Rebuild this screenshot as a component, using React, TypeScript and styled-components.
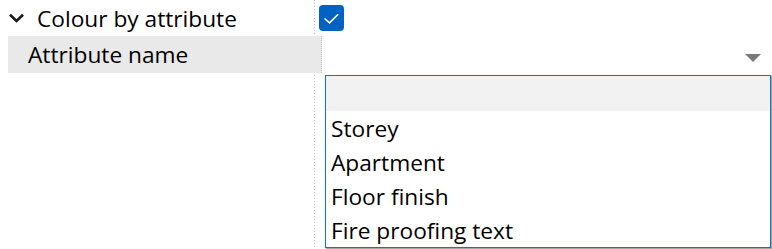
import React from 'react';
import styled, { createGlobalStyle } from 'styled-components';

const Global = createGlobalStyle`
    html, body {
        margin: 0;
        padding: 0;
        background: #fff;
    }
    body {
        font-family: 'Open Sans', 'Noto Sans', sans-serif;
        color: #000;
    }
`;

const Sheet = styled.div`
    position: relative;
    width: 772px;
    height: 249px;
    overflow: hidden;
    font-size: 22.7px;
    background: repeating-linear-gradient(to bottom, #c4c4c4 0 1px, transparent 1px 3px) 314px 0 / 1px 100% no-repeat;
`;

const Row = styled.div`
    display: grid;
    grid-template-columns: 314px 1fr;
    height: 36px;
`;

const Label = styled.div`
    display: flex;
    align-items: center;
    gap: 12px;
    padding-left: 8px;
    white-space: nowrap;
`;

const Value = styled.div`
    display: flex;
    align-items: center;
    padding-left: 5px;
`;

const SubRow = styled.div`
    display: grid;
    grid-template-columns: 314px 1fr;
    height: 37px;
    margin-left: 8px;
`;

const SubLabel = styled.div`
    display: flex;
    align-items: center;
    padding-left: 20px;
    background: #e9e9e9;
    border-right: 1px dotted #c4c4c4;
    white-space: nowrap;
`;

const Select = styled.div`
    position: relative;
    display: flex;
    align-items: center;
    justify-content: flex-end;
    padding: 6px 11px 0 0;
`;

const Arrow = styled.span`
    width: 0;
    height: 0;
    border-left: 8px solid transparent;
    border-right: 8px solid transparent;
    border-top: 8px solid #7a7a7a;
`;

const CheckBox = styled.span`
    display: inline-flex;
    align-items: center;
    justify-content: center;
    width: 25px;
    height: 26px;
    border-radius: 4px;
    background: #0063c4;
`;

const Popup = styled.ul`
    position: absolute;
    top: 39px;
    left: 3px;
    right: 1px;
    margin: 0;
    padding: 0;
    list-style: none;
    background: #fff;
    border: 1px solid #0078d7;
    box-shadow: 1px 1px 1px rgba(0, 0, 0, 0.35);
`;

const Option = styled.li<{ $active?: boolean }>`
    display: flex;
    align-items: center;
    height: ${(p) => (p.$active ? 35 : 34)}px;
    padding-left: 5px;
    background: ${(p) => (p.$active ? '#f2f2f2' : 'transparent')};
    white-space: nowrap;
`;

const options = ['', 'Storey', 'Apartment', 'Floor finish', 'Fire proofing text'];

function Chevron() {
    return (
        <svg width="17" height="10" viewBox="0 0 17 10">
            <path d="M2 1.8 L8.5 8 L15 1.8" fill="none" stroke="#1a1a1a" strokeWidth="2.6" />
        </svg>
    );
}

function Check() {
    return (
        <svg width="25" height="26" viewBox="0 0 25 26">
            <path d="M5.5 13.5 L10.5 17.8 L19.2 9.2" fill="none" stroke="#fff" strokeWidth="1.6" />
        </svg>
    );
}

function App() {
    return (
        <Sheet>
            <Global />
            <Row>
                <Label>
                    <Chevron />
                    Colour by attribute
                </Label>
                <Value>
                    <CheckBox>
                        <Check />
                    </CheckBox>
                </Value>
            </Row>
            <SubRow>
                <SubLabel>Attribute name</SubLabel>
                <Select>
                    <Arrow />
                    <Popup>
                        {options.map((o, i) => (
                            <Option key={i} $active={i === 0}>
                                {o}
                            </Option>
                        ))}
                    </Popup>
                </Select>
            </SubRow>
        </Sheet>
    );
}

export default App;
